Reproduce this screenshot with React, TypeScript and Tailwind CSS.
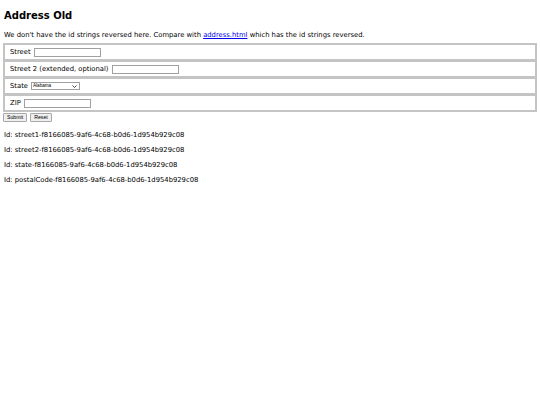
const ids = [
  'street1-f8166085-9af6-4c68-b0d6-1d954b929c08',
  'street2-f8166085-9af6-4c68-b0d6-1d954b929c08',
  'state-f8166085-9af6-4c68-b0d6-1d954b929c08',
  'postalCode-f8166085-9af6-4c68-b0d6-1d954b929c08',
]

function Field({ label, children }: { label: string; children: React.ReactNode }) {
  return (
    <div className="-mt-px flex h-[18px] items-center gap-[3px] border-2 border-[#c4c4c4] pl-[5px] first:mt-0">
      <span>{label}</span>
      {children}
    </div>
  )
}

const input = 'h-[9px] w-[67px] border border-[#a0a0a0] bg-white'
const button = 'flex h-[9px] items-center rounded-[1px] border border-[#a8a8a8] bg-[#efefef] px-[3px]'

export default function App() {
  return (
    <div className="min-h-[405px] bg-white px-[3px] pt-[10px] text-[6.8px] text-black [font-family:'DejaVu_Sans',sans-serif]">
      <h1 className="ml-px text-[10px] font-bold leading-[12px]">Address Old</h1>
      <p className="ml-px mt-[9px] leading-[9px]">
        We don't have the id strings reversed here. Compare with{' '}
        <a href="#" className="text-[#0000ee] underline">address.html</a> which has the id strings reversed.
      </p>
      <form className="mt-[3px]">
        <div className="flex flex-col">
          <Field label="Street">
            <span className={input} />
          </Field>
          <Field label="Street 2 (extended, optional)">
            <span className={input} />
          </Field>
          <Field label="State">
            <span className="flex h-[8px] w-[49px] items-center justify-between border border-[#a0a0a0] bg-white pl-px pr-[2px] text-[4.6px] [font-family:'Liberation_Sans',sans-serif]">
              Alabama
              <svg width="5" height="3" viewBox="0 0 5 3"><path d="M0.5 0.5 L2.5 2.5 L4.5 0.5" fill="none" stroke="#333" strokeWidth="0.9" /></svg>
            </span>
          </Field>
          <Field label="ZIP">
            <span className={input} />
          </Field>
        </div>
        <div className="mt-px flex gap-[3px] text-[5.2px] [font-family:'Liberation_Sans',sans-serif]">
          <span className={button}>Submit</span>
          <span className={button}>Reset</span>
        </div>
      </form>
      <div className="mt-[9px] flex flex-col gap-[6px] pl-px">
        {ids.map((id) => (
          <p key={id} className="leading-[9px]">Id: {id}</p>
        ))}
      </div>
    </div>
  )
}
